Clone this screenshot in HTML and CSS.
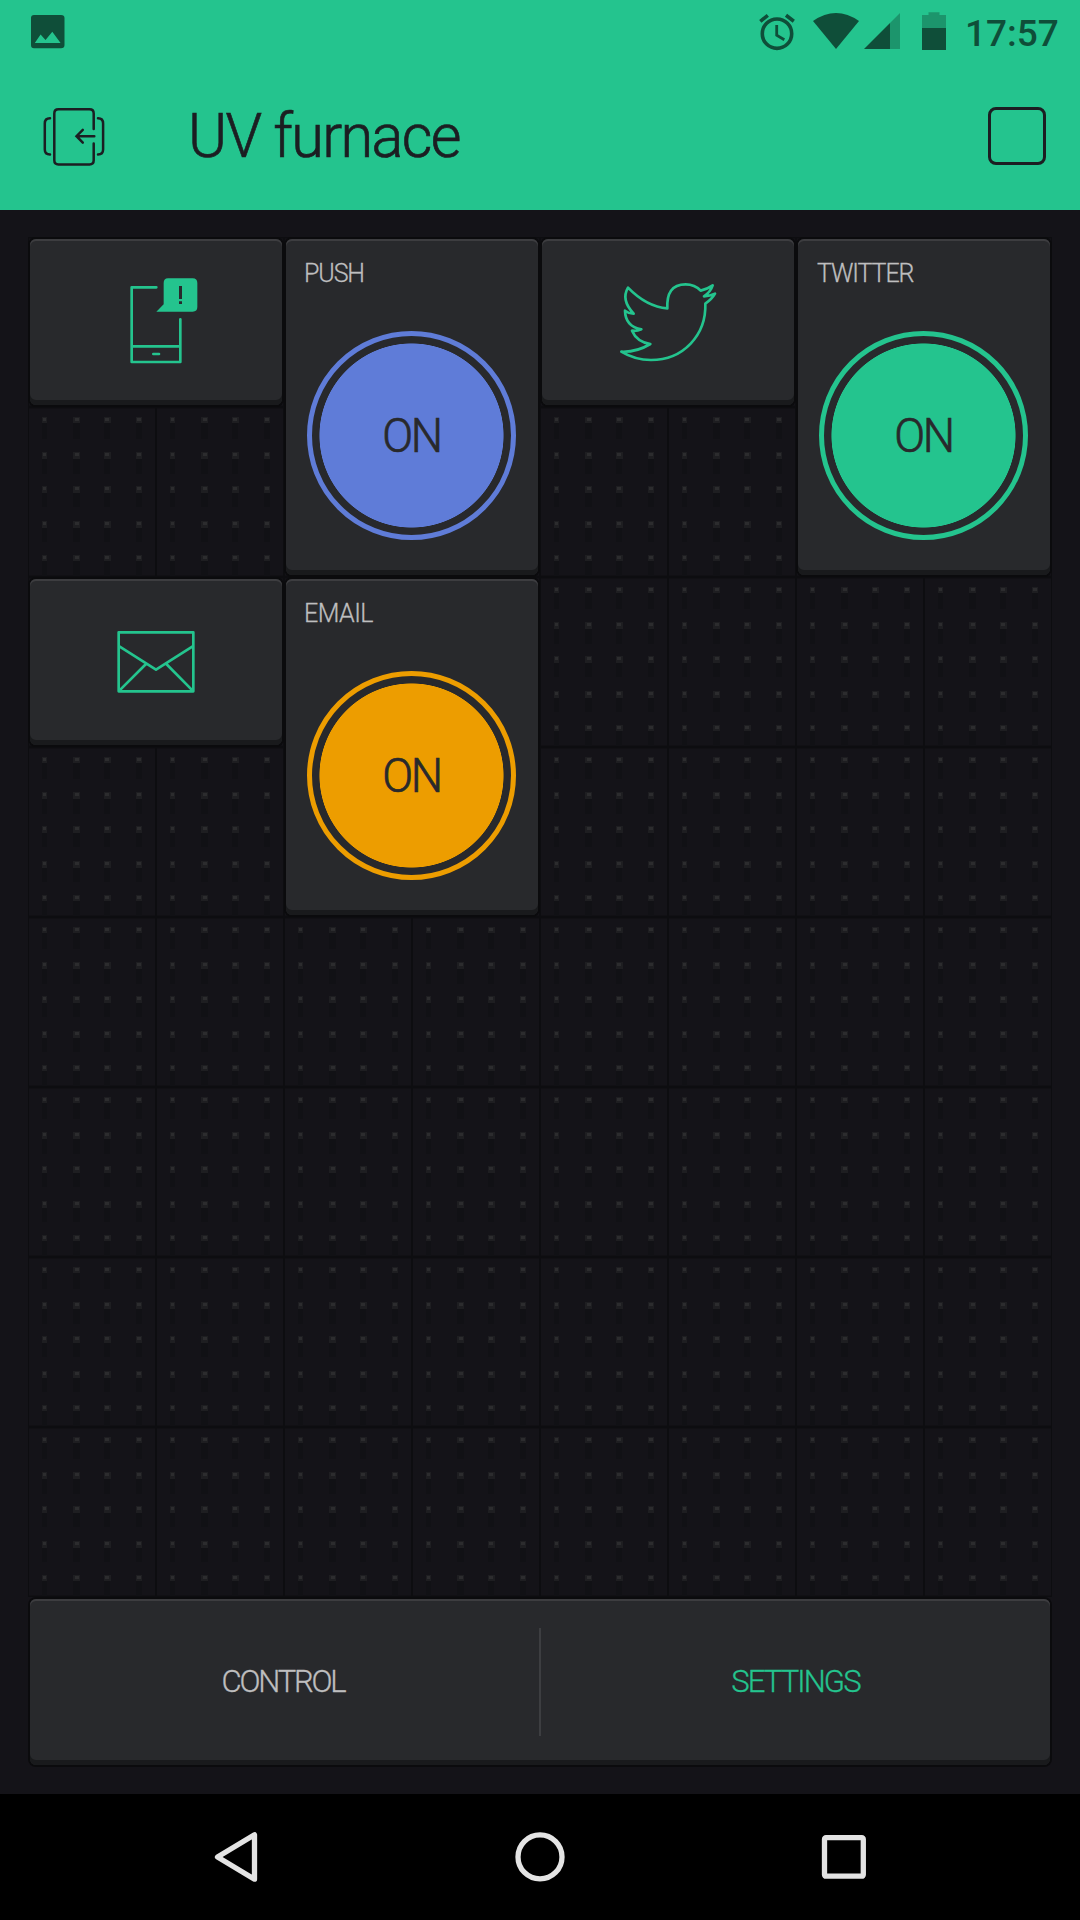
FILE: index.html
```html
<!DOCTYPE html>
<html lang="en">
<head>
<meta charset="utf-8">
<title>UV furnace</title>
<link rel="stylesheet" href="styles.css">
</head>
<body>
<header class="top">
  <div class="status">
    <svg class="status-photo" width="36" height="36" viewBox="30 14 36 36">
      <path fill-rule="evenodd" d="M34 15H61Q64.5 15 64.5 18V45Q64.5 48.3 61 48.3H34Q31 48.3 31 45V18Q31 15 34 15ZM34.8 43H60.6L52.3 31.7L45.5 40L40.6 34.5Z"/>
    </svg>
    <svg class="status-icons" width="190" height="40" viewBox="758 11 190 40">
      <g class="alarm">
        <circle cx="777" cy="33.7" r="14.7"/>
        <path d="M760.3 21.3L767.8 15.3M786 15.3L793.8 21.3"/>
        <path class="hands" d="M776.7 25V35.3L784.3 39.8"/>
      </g>
      <path d="M813 21Q836 5 859 21L836 49Z"/>
      <path class="dim" d="M890 23L900 13V49H890Z"/>
      <path d="M864 49L890 23V49Z"/>
      <path class="dim" d="M922 28V15H928.5V12.3H939.5V15H946V28Z"/>
      <path d="M922 28H946V50H922Z"/>
    </svg>
    <span class="clock">17:57</span>
  </div>
  <div class="bar">
    <svg class="exit" width="64" height="60" viewBox="42 107 64 60">
      <path d="M93.7 129V113.5Q93.7 109.3 89.5 109.3H58.5Q54.3 109.3 54.3 113.5V160.3Q54.3 164.5 58.5 164.5H89.5Q93.7 164.5 93.7 160.3V143.5"/>
      <path d="M94.3 136.2H76.5M82.8 129.8L76.5 136.2L82.8 142.7M50 118.3Q44.8 118.3 44.8 123.5V149.5Q44.8 154.5 50 154.5M98 118.3Q103.1 118.3 103.1 123.5V149.5Q103.1 154.5 98 154.5"/>
    </svg>
    <h1 class="title">UV furnace</h1>
    <span class="stop"></span>
  </div>
</header>
<main class="board">
  <svg class="pegs" width="1024" height="1360">
    <defs>
      <pattern id="cell" width="128" height="170" patternUnits="userSpaceOnUse">
        <path class="groove" d="M0 0H128V1.5H0ZM0 168.5H128V170H0ZM0 0H1V170H0ZM127 0H128V170H127Z"/>
        <path class="tail" d="M14 16h5v16h-5zM45 16h7v16h-7zM76 16h6v16h-6zM108 16h6v16h-6zM14 51h5v16h-5zM45 51h7v16h-7zM76 51h6v16h-6zM108 51h6v16h-6zM14 85h5v15h-5zM45 85h7v15h-7zM76 85h6v15h-6zM108 85h6v15h-6zM14 120h5v15h-5zM45 120h7v15h-7zM76 120h6v15h-6zM108 120h6v15h-6zM14 154h5v15h-5zM45 154h7v15h-7zM76 154h6v15h-6zM108 154h6v15h-6z"/>
        <path class="peg" d="M14 10h5v6h-5zM45 10h7v6h-7zM76 10h7v6h-7zM108 10h6v6h-6zM14 45h5v7h-5zM45 45h7v7h-7zM76 45h7v7h-7zM108 45h6v7h-6zM14 79h5v7h-5zM45 79h7v7h-7zM76 79h7v7h-7zM108 79h6v7h-6zM14 114h5v7h-5zM45 114h7v7h-7zM76 114h7v7h-7zM108 114h6v7h-6zM14 148h5v6h-5zM45 148h7v6h-7zM76 148h7v6h-7zM108 148h6v6h-6z"/>
        <path class="peg-hi" d="M15 11h3v3h-3zM47 11h4v3h-4zM77 11h4v3h-4zM109 11h4v3h-4zM15 46h3v3h-3zM47 46h4v3h-4zM77 46h4v3h-4zM109 46h4v3h-4zM15 80h3v3h-3zM47 80h4v3h-4zM77 80h4v3h-4zM109 80h4v3h-4zM15 115h3v3h-3zM47 115h4v3h-4zM77 115h4v3h-4zM109 115h4v3h-4zM15 149h3v3h-3zM47 149h4v3h-4zM77 149h4v3h-4zM109 149h4v3h-4z"/>
      </pattern>
    </defs>
    <rect width="1024" height="1360" fill="url(#cell)"/>
  </svg>
  <section class="card push-icon">
    <svg class="glyph" viewBox="30 42 756 498">
      <path d="M409 187H335V411H481V283M335 364H481"/>
      <path class="home" d="M400 387H417"/>
      <path class="solid" fill-rule="evenodd" d="M444 160H518Q532 160 532 174V246Q532 260 518 260H409L431 238V174Q431 160 444 160ZM477 183V222H486V183ZM477 229V237H486V229Z"/>
    </svg>
  </section>
  <section class="card tall push">
    <h2 class="label">PUSH</h2>
    <button class="knob blue"><span class="on">ON</span></button>
  </section>
  <section class="card twitter-icon">
    <svg class="glyph" viewBox="6 42 756 498">
      <path d="M264 188C300 225 340 247 382 250C380 205 395 178 437 178C455 178 470 184 482 197Q502 192 518 181Q512 200 492 214Q510 213 525 206Q516 222 496 236C499 330 430 405 333 405C300 405 270 396 244 380Q290 382 331 357Q290 350 276 317Q290 319 304 313Q256 304 255 257Q265 265 281 266Q242 225 264 188Z"/>
    </svg>
  </section>
  <section class="card tall twitter">
    <h2 class="label twitter-label">TWITTER</h2>
    <button class="knob green"><span class="on">ON</span></button>
  </section>
  <section class="card email-icon">
    <svg class="glyph" viewBox="-180 -63 756 498">
      <path d="M86 97H310V274H86ZM88 139L198 209L308 139M168 192L88 272M229 192L308 272"/>
    </svg>
  </section>
  <section class="card tall email">
    <h2 class="label email-label">EMAIL</h2>
    <button class="knob orange"><span class="on">ON</span></button>
  </section>
</main>
<nav class="card tabs">
  <a class="tab"><span class="control">CONTROL</span></a>
  <span class="divider"></span>
  <a class="tab"><span class="settings">SETTINGS</span></a>
</nav>
<footer class="system">
  <svg width="1080" height="126" viewBox="0 1794 1080 126">
    <path d="M217.5 1857L254.5 1834.8V1879.2Z"/>
    <circle cx="540" cy="1856.9" r="22"/>
    <rect x="824.5" y="1837.7" width="38.8" height="38.5" rx="1.5"/>
  </svg>
</footer>
</body>
</html>
```
FILE: styles.css
```css
* { box-sizing: border-box; }

body {
  margin: 0;
  width: 1080px;
  height: 1920px;
  background: #141318;
  font-family: Roboto, "Liberation Sans", sans-serif;
  display: flex;
  flex-direction: column;
  overflow: hidden;
}

.top {
  height: 210px;
  background: #24c48e;
  color: #1c1e22;
}

.status {
  height: 64px;
  display: flex;
  align-items: flex-start;
  padding: 14px 0 0 30px;
  fill: #0f4e39;
  color: #0f4e39;
}
.status-icons { margin: -3px 0 0 692px; }
.dim { fill: #1c956c; }
.alarm { fill: none; stroke: #0f4e39; stroke-width: 3.6; }
.alarm .hands { stroke-width: 2.8; }
.clock {
  margin: -2px 0 0 17px;
  font-size: 37px;
  font-weight: 500;
  line-height: 44px;
}

.bar {
  height: 146px;
  display: flex;
  align-items: flex-start;
  padding: 43px 34px 0 42px;
}
.exit {
  fill: none;
  stroke: #1c1e22;
  stroke-width: 2.5;
  stroke-linecap: round;
}
.title {
  margin: -7px 0 0 82px;
  font-size: 62px;
  font-weight: 300;
  line-height: 72px;
  letter-spacing: -1.7px;
  transform: scaleX(0.957);
  transform-origin: left;
  -webkit-text-stroke: 0.7px currentColor;
}
.stop {
  width: 58px;
  height: 58px;
  margin-left: auto;
  border: 3px solid #1c1e22;
  border-radius: 8px;
}

.board {
  width: 1024px;
  height: 1360px;
  margin: 27px 0 0 28px;
  display: grid;
  grid-template-columns: repeat(4, 256px);
  grid-template-rows: repeat(8, 170px);
}
.pegs { grid-area: 1 / 1 / -1 / -1; display: block; }
.groove { fill: #0d0d10; }
.tail { fill: #111115; }
.peg { fill: #1e1e21; }
.peg-hi { fill: #2c2c2e; }

.card {
  margin: 2px;
  border-radius: 6px;
  background: #28292c;
  box-shadow: inset 0 2px 0 #3d3d40, inset 0 -5px 0 #191a1c, 0 0 0 2px #0b0b0d;
  position: relative;
}
.push-icon { grid-area: 1 / 1; }
.push { grid-area: 1 / 2 / 3 / 3; }
.twitter-icon { grid-area: 1 / 3; }
.twitter { grid-area: 1 / 4 / 3 / 5; }
.email-icon { grid-area: 3 / 1; }
.email { grid-area: 3 / 2 / 5 / 3; }

.glyph {
  display: block;
  width: 252px;
  height: 166px;
  fill: none;
  stroke: #24c48e;
  stroke-width: 8;
  stroke-linejoin: round;
  stroke-linecap: round;
}
.glyph .solid { fill: #24c48e; stroke: none; }

.tall {
  display: flex;
  flex-direction: column;
  align-items: center;
}
.label {
  align-self: flex-start;
  margin: 20px 0 0 18px;
  font-size: 25px;
  font-weight: 300;
  line-height: 30px;
  letter-spacing: -1.1px;
  -webkit-text-stroke: 0.3px currentColor;
  color: #bebebf;
}
.twitter-label { margin-left: 19px; }
.email-label { letter-spacing: -0.5px; }
.knob {
  width: 209px;
  height: 209px;
  margin: 42px 1px 0 0;
  border: 5px solid;
  border-radius: 50%;
  padding: 0;
  display: flex;
  align-items: center;
  justify-content: center;
  font-family: inherit;
}
.blue { border-color: #5f7cd8; background: radial-gradient(circle, #5f7cd8 91.7px, #28292c 92.4px); }
.green { border-color: #24c48e; background: radial-gradient(circle, #24c48e 91.7px, #28292c 92.4px); }
.orange { border-color: #ed9d00; background: radial-gradient(circle, #ed9d00 91.7px, #28292c 92.4px); }
.on {
  margin: -1px 0 0;
  font-size: 49px;
  font-weight: 300;
  letter-spacing: -2.6px;
  transform: scaleX(0.93);
  -webkit-text-stroke: 0.7px currentColor;
  color: #28292c;
}

.tabs {
  width: 1020px;
  height: 166px;
  margin: 2px 0 0 30px;
  display: flex;
  align-items: center;
}
.tab {
  flex: 1;
  padding-bottom: 2px;
  text-align: center;
  font-size: 31px;
  font-weight: 300;
  letter-spacing: -1.9px;
  -webkit-text-stroke: 0.3px currentColor;
  color: #bebebf;
}
.control { letter-spacing: -2.2px; margin-right: 3px; }
.settings { color: #24c48e; }
.divider { width: 2px; height: 108px; background: #3d3e41; }

.system {
  height: 126px;
  margin-top: 29px;
  background: #000;
}
.system svg {
  display: block;
  fill: none;
  stroke: #e4e4e4;
  stroke-width: 5.3;
  stroke-linejoin: round;
}
```
